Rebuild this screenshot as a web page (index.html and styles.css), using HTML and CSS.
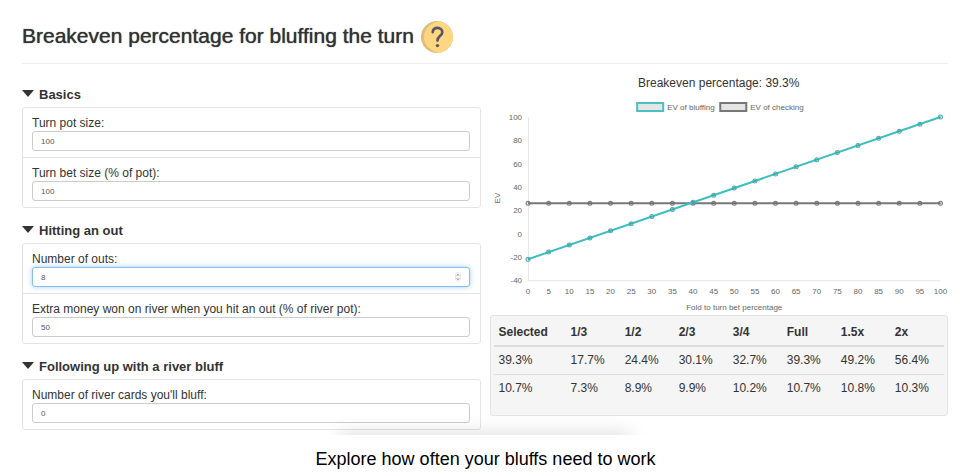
FILE: index.html
```html
<!DOCTYPE html>
<html lang="en">
<head>
<meta charset="utf-8">
<title>Breakeven percentage for bluffing the turn</title>
<link rel="stylesheet" href="styles.css">
</head>
<body>
<main class="app">
  <header class="header">
    <h1>Breakeven percentage for bluffing the turn</h1>
    <button class="help" type="button" aria-label="Help">
      <svg viewBox="0 0 32 32" aria-hidden="true">
        <circle cx="16" cy="16" r="16" fill="#e0bd76"/>
        <path d="M18 0.2A16 16 0 0 1 18 31.8A16 16 0 0 1 18 0.2Z" fill="#ffd782"/>
        <circle cx="17.5" cy="16" r="14.5" fill="#ffd782"/>
        <path d="M11.7 11.2C11.9 8.3 14 6.9 16.5 6.9C19.4 6.9 21.3 8.7 21.3 11.2C21.3 14.8 16.5 14.9 16.5 19.6" fill="none" stroke="#5d5360" stroke-width="2.6" stroke-linecap="round"/>
        <circle cx="16.5" cy="24.6" r="1.7" fill="#5d5360"/>
      </svg>
    </button>
  </header>
  <div class="columns">
    <form class="inputs">
      <details open>
        <summary>Basics</summary>
        <div class="group">
          <div class="field"><label for="pot">Turn pot size:</label><input id="pot" type="number" value="100"></div>
          <div class="field"><label for="bet">Turn bet size (% of pot):</label><input id="bet" type="number" value="100"></div>
        </div>
      </details>
      <details open>
        <summary>Hitting an out</summary>
        <div class="group">
          <div class="field">
            <label for="outs">Number of outs:</label><input id="outs" class="active" type="number" value="8">
            <svg class="spinner" viewBox="0 0 6 10" aria-hidden="true"><rect x=".5" y=".5" width="5" height="9" rx="2.5" fill="#fafafa" stroke="#e8e8e8"/><path d="M2 3.5l1-1 1 1M2 6.5l1 1 1-1" fill="none" stroke="#555"/></svg>
          </div>
          <div class="field"><label for="extra">Extra money won on river when you hit an out (% of river pot):</label><input id="extra" type="number" value="50"></div>
        </div>
      </details>
      <details open>
        <summary>Following up with a river bluff</summary>
        <div class="group">
          <div class="field"><label for="cards">Number of river cards you'll bluff:</label><input id="cards" type="number" value="0"></div>
        </div>
      </details>
    </form>
    <section class="results">
      <h2>Breakeven percentage: 39.3%</h2>
      <svg id="chart" class="chart" viewBox="0 0 458 221" role="img" aria-label="EV by fold to turn bet percentage"></svg>
      <div class="well">
        <table>
          <thead>
            <tr><th>Selected</th><th>1/3</th><th>1/2</th><th>2/3</th><th>3/4</th><th>Full</th><th>1.5x</th><th>2x</th></tr>
          </thead>
          <tbody>
            <tr><td>39.3%</td><td>17.7%</td><td>24.4%</td><td>30.1%</td><td>32.7%</td><td>39.3%</td><td>49.2%</td><td>56.4%</td></tr>
            <tr><td>10.7%</td><td>7.3%</td><td>8.9%</td><td>9.9%</td><td>10.2%</td><td>10.7%</td><td>10.8%</td><td>10.3%</td></tr>
          </tbody>
        </table>
      </div>
    </section>
  </div>
</main>
<p class="caption">Explore how often your bluffs need to work</p>
<script src="chart.js"></script>
</body>
</html>
```
FILE: styles.css
```css
* { box-sizing: border-box; }
body {
  margin: 0;
  background: #fff;
  color: #333;
  font: 12px/16px "Liberation Sans", Arial, sans-serif;
}
.app {
  position: relative;
  overflow: hidden;
  padding: 21px 23px 5px 22px;
}
.app::after {
  content: "";
  position: absolute;
  left: 35%;
  right: 35%;
  bottom: -20px;
  height: 20px;
  box-shadow: 0 0 20px rgba(0, 0, 0, .16);
}
.header {
  display: flex;
  align-items: center;
  gap: 7px;
  padding-bottom: 10px;
  border-bottom: 1px solid #eee;
}
h1 {
  margin: 0;
  padding-bottom: 2px;
  font-size: 21px;
  line-height: 30px;
  font-weight: normal;
  text-shadow: 0 0 1px #333;
}
.help { width: 32px; height: 32px; padding: 0; border: 0; background: none; }
.help svg { display: block; width: 100%; height: 100%; }
.columns {
  display: grid;
  grid-template-columns: 1fr 1fr;
  gap: 9px;
}
.inputs { padding-top: 21px; }
details { margin-bottom: 13px; }
details:last-child { margin-bottom: 0; }
summary {
  display: flex;
  align-items: center;
  gap: 5px;
  padding-bottom: 2px;
  font-size: 13px;
  line-height: 20px;
  font-weight: bold;
}
summary::before {
  content: "";
  margin-bottom: 3px;
  border: 6px solid transparent;
  border-top: 7px solid #333;
  border-bottom: 0;
}
.group { border: 1px solid #e4e4e4; border-radius: 3px; }
.field { position: relative; padding: 7px 10px 6px 9px; }
.field + .field { border-top: 1px solid #e4e4e4; }
label { display: block; }
.field input {
  display: block;
  width: 100%;
  height: 20px;
  padding: 0 8px;
  border: 1px solid #ccc;
  border-radius: 3px;
  background: #fff;
  color: #555;
  font: 8px "Liberation Sans", Arial, sans-serif;
  appearance: textfield;
}
.field input::-webkit-inner-spin-button { display: none; }
.field input.active { border-color: #84bff0; box-shadow: 0 0 5px rgba(102, 175, 233, .6); }
.spinner { position: absolute; right: 19px; bottom: 11px; width: 6px; height: 10px; }
.results { padding-top: 11px; }
h2 { margin: 0 0 3px; font-size: 12px; line-height: 16px; font-weight: normal; text-align: center; }
.chart { display: block; width: 100%; }
.chart text { fill: #666; font-size: 8px; }
.well {
  padding: 3px 3px 13px;
  border: 1px solid #e3e3e3;
  border-radius: 3px;
  background: #f5f5f5;
}
table { width: 100%; border-collapse: collapse; table-layout: fixed; }
th, td { width: 12%; padding: 5px; text-align: left; line-height: 17px; }
th { line-height: 16px; border-bottom: 2px solid #ddd; }
th:first-child { width: 16%; }
tbody tr + tr td { border-top: 1px solid #ddd; }
.caption { margin: 14px 0 0; color: #000; font-size: 18px; line-height: 20px; text-align: center; }
```
FILE: chart.js
```js
const svg = document.getElementById('chart');
const left = 38, right = 450, top_ = 23, bottom = 186;
const x = p => left + p / 100 * (right - left);
const y = v => bottom - (v + 40) / 140 * (bottom - top_);

function add(tag, attrs, text) {
  const el = document.createElementNS('http://www.w3.org/2000/svg', tag);
  for (const k in attrs) el.setAttribute(k, attrs[k]);
  if (text !== undefined) el.textContent = text;
  svg.appendChild(el);
}

// Axes
add('path', { d: `M${left + .5} ${top_}V${bottom + .5}H${right}`, fill: 'none', stroke: '#e5e5e5' });
for (let v = -40; v <= 100; v += 20) add('text', { x: 32, y: y(v) + 3, 'text-anchor': 'end' }, v);
for (let p = 0; p <= 100; p += 5) add('text', { x: x(p), y: 200, 'text-anchor': 'middle' }, p);
add('text', { x: 244, y: 216, 'text-anchor': 'middle' }, 'Fold to turn bet percentage');
add('text', { transform: 'translate(10 104) rotate(-90)', 'text-anchor': 'middle' }, 'EV');

// Legend
add('rect', { x: 147, y: 9, width: 26, height: 8, fill: '#e5e5e5', stroke: '#4bc0c0', 'stroke-width': 2 });
add('text', { x: 177, y: 16 }, 'EV of bluffing');
add('rect', { x: 230, y: 9, width: 26, height: 8, fill: '#e5e5e5', stroke: '#777', 'stroke-width': 2 });
add('text', { x: 260, y: 16 }, 'EV of checking');

// Series
function series(ev, color, dot) {
  add('path', { d: `M${x(0)} ${y(ev(0))}L${x(100)} ${y(ev(100))}`, stroke: color, 'stroke-width': 2 });
  for (let p = 0; p <= 100; p += 5) {
    add('circle', { cx: x(p), cy: y(ev(p)), r: 2, fill: 'rgba(0,0,0,.1)', stroke: dot, 'stroke-width': 1 });
  }
}
series(() => 26, '#777', '#777');
series(p => -22 + 1.22 * p, '#3dbfc2', '#4aaeb0');
```
